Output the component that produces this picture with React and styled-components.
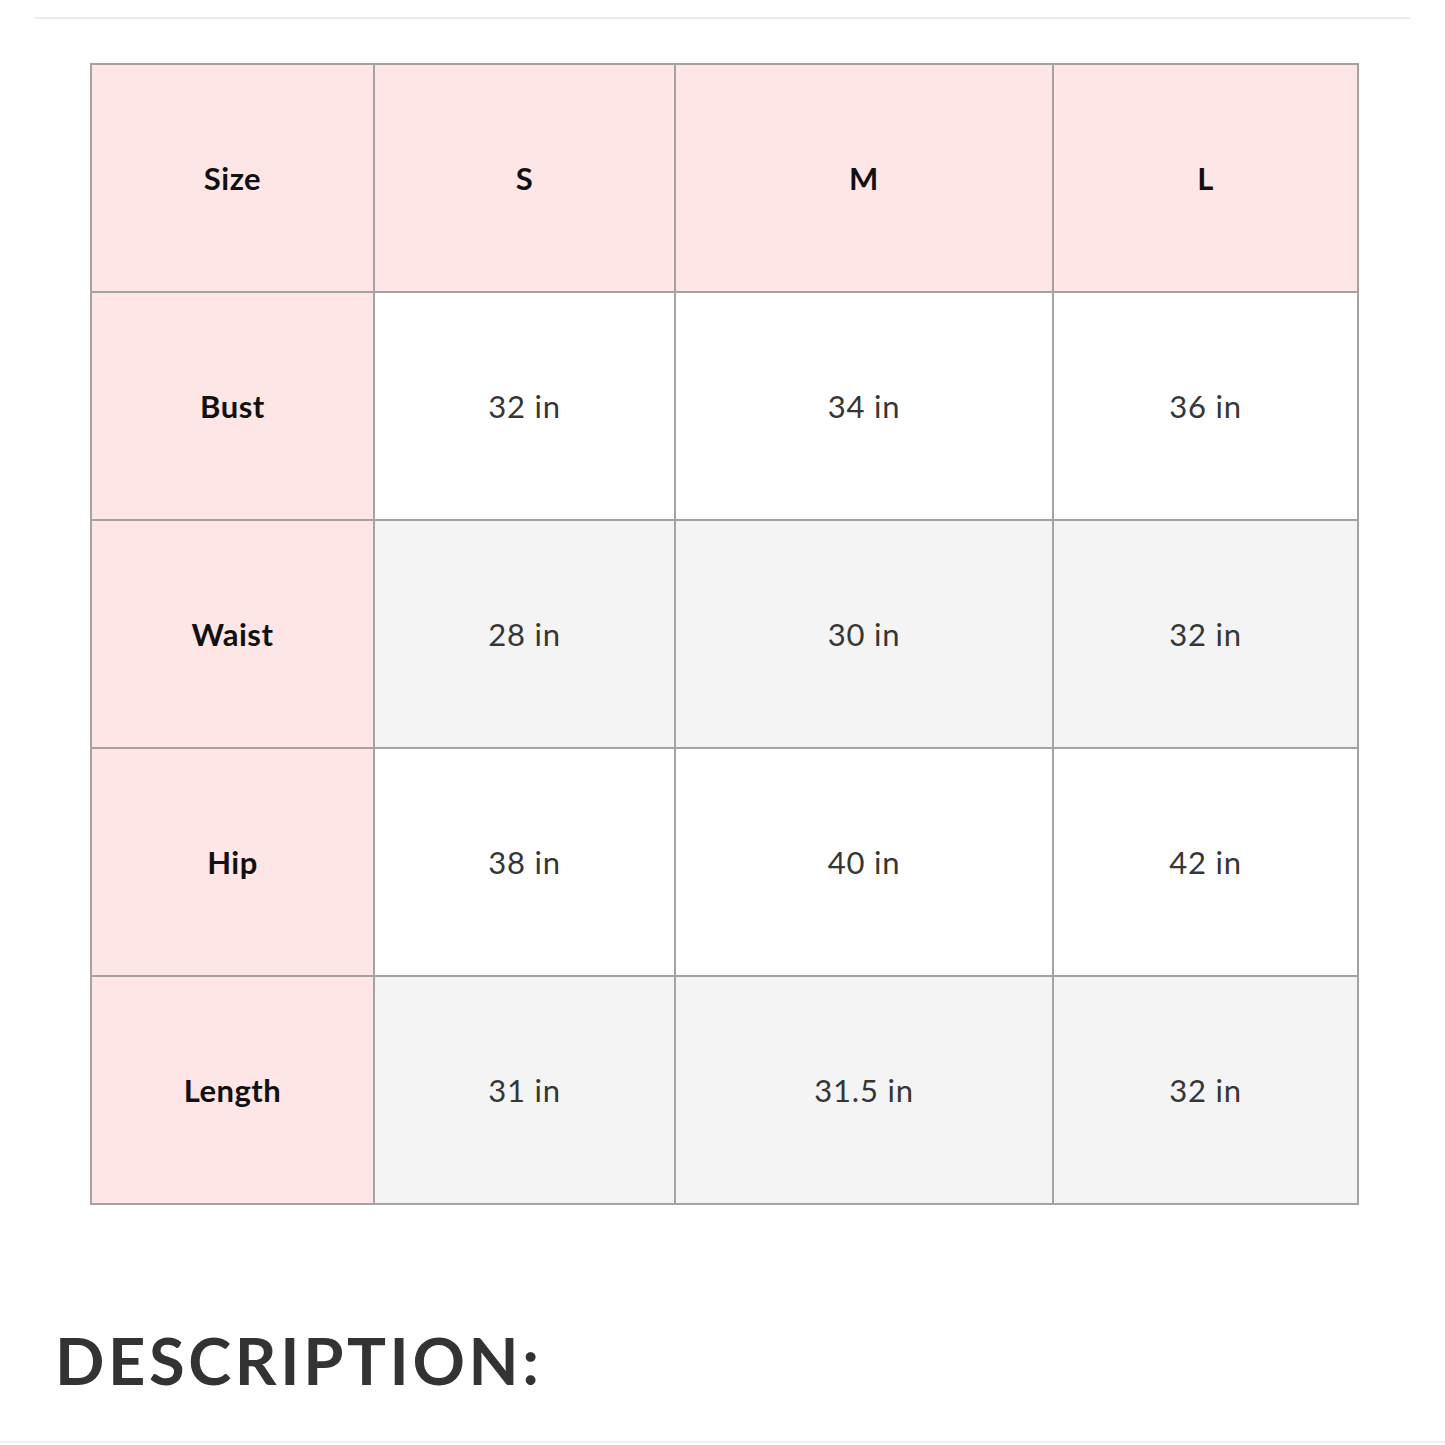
import React from 'react';
import styled, { createGlobalStyle } from 'styled-components';

const GlobalStyle = createGlobalStyle`
  html, body {
    margin: 0;
    padding: 0;
    background: #ffffff;
  }
  body {
    font-family: 'Lato', 'Open Sans', sans-serif;
  }
`;

// --- Styled Components ---

const Page = styled.div`
  width: 1445px;
  height: 1445px;
  overflow: hidden;
  padding-top: 17px;
  box-sizing: border-box;
`;

const Divider = styled.hr`
  margin: 0 35px 0 35px;
  border: none;
  height: 2px;
  background: #ebebeb;
`;

const TableWrap = styled.div`
  padding: 44px 0 0 90px;
`;

const ChartTable = styled.table`
  border-collapse: collapse;
  table-layout: fixed;
  width: 1267px;
  border: 2px solid #a3a3a3;
`;

const Cell = styled.td`
  height: 226px;
  padding: 0;
  text-align: center;
  vertical-align: middle;
  border: 2px solid #a3a3a3;
  font-size: 31px;
  background: ${({ $pink, $shade }) => ($pink ? '#fee6e6' : $shade ? '#f4f4f4' : '#ffffff')};
  color: ${({ $label }) => ($label ? '#111111' : '#363636')};
  font-weight: ${({ $label }) => ($label ? 700 : 400)};
  letter-spacing: ${({ $label }) => ($label ? '0.5px' : '0.8px')};
`;

const Heading = styled.h2`
  margin: 123px 0 0 55px;
  font-family: 'Lato', sans-serif;
  font-weight: 700;
  font-size: 65px;
  letter-spacing: 3.6px;
  color: #333333;
  line-height: 1;
`;

const BottomLine = styled.div`
  margin-top: 48px;
  height: 2px;
  background: #f0f0f0;
`;

const sizes = ['S', 'M', 'L'];
const widths = [283, 301, 378, 305];

const rows = [
  { name: 'Bust', values: ['32 in', '34 in', '36 in'] },
  { name: 'Waist', values: ['28 in', '30 in', '32 in'] },
  { name: 'Hip', values: ['38 in', '40 in', '42 in'] },
  { name: 'Length', values: ['31 in', '31.5 in', '32 in'] },
];

const App = () => {
  return (
    <Page>
      <GlobalStyle />
      <Divider />
      <TableWrap>
        <ChartTable>
          <colgroup>
            {widths.map((w, i) => (
              <col key={i} style={{ width: w }} />
            ))}
          </colgroup>
          <thead>
            <tr>
              <Cell as="th" $pink $label>Size</Cell>
              {sizes.map((s) => (
                <Cell as="th" key={s} $pink $label>{s}</Cell>
              ))}
            </tr>
          </thead>
          <tbody>
            {rows.map((row, i) => (
              <tr key={row.name}>
                <Cell $pink $label>{row.name}</Cell>
                {row.values.map((v, j) => (
                  <Cell key={j} $shade={i % 2 === 1}>{v}</Cell>
                ))}
              </tr>
            ))}
          </tbody>
        </ChartTable>
      </TableWrap>
      <Heading>DESCRIPTION:</Heading>
      <BottomLine />
    </Page>
  );
};

export default App;
